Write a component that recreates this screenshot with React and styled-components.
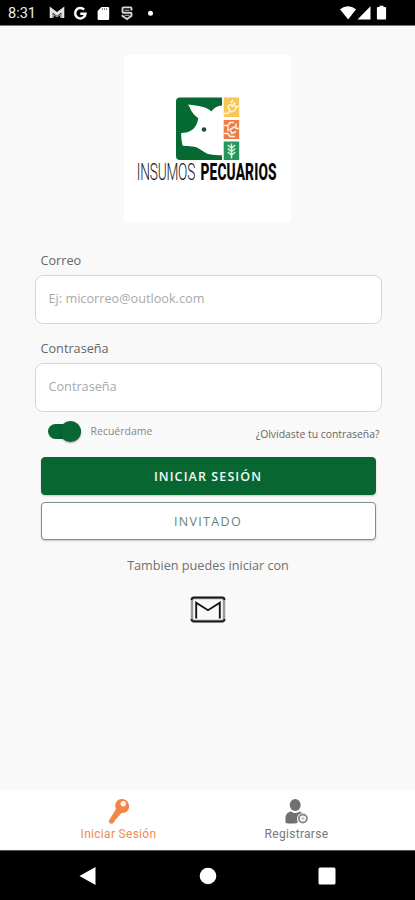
import React, { useState } from "react";
import styled, { createGlobalStyle } from "styled-components";

const GlobalStyle = createGlobalStyle`
  * {
    box-sizing: border-box;
  }

  body {
    margin: 0;
    background: #f9f9f9;
    font-family: "Open Sans", "Noto Sans", sans-serif;
  }

  button,
  input {
    font-family: inherit;
  }
`;

const StatusIcons = () => (
  <svg width="112" height="16" viewBox="0 0 112 16" fill="#fff">
    <path
      d="M2.2 13V4.500L8 9l5.800-4.500V13"
      fill="none"
      stroke="#e4e4e4"
      strokeWidth="3"
    />
    <path d="M4.500 12.500V9.500L8 12l3.500-2.500v3" fill="none" stroke="#aaa" />
    <path
      d="M35.100 4.600A5.200 5.200 0 1 0 36.500 8.700H31.300"
      fill="none"
      stroke="#fff"
      strokeWidth="2.500"
    />
    <path d="M52.500 2H59a1.200 1.200 0 0 1 1.200 1.200v10.600a1.200 1.200 0 0 1-1.200 1.200h-9.200a1.200 1.200 0 0 1-1.200-1.200V6z" />
    <path d="M53.500 3v2M55.500 3v2M57.500 3v2" stroke="#888" />
    <path
      d="M82.500 5.500V3.400a1 1 0 0 0-1-1h-7a1 1 0 0 0-1 1v3.300a1 1 0 0 0 1 1h7a1 1 0 0 1 1 1v2L78 14l-4.500-3v-1.300"
      fill="none"
      stroke="#d8d8d8"
      strokeWidth="1.900"
    />
    <path d="M75.500 5.200h5M75.500 10.300h5" stroke="#bbb" />
    <circle cx="101.500" cy="8.200" r="2.500" />
  </svg>
);

const SignalIcons = () => (
  <svg width="48" height="16" viewBox="0 0 48 16" fill="#fff">
    <path d="M0 4.300Q8 -1.600 16 4.300L8.200 14.600z" />
    <path d="M17.500 14.600L30.500 1.300v13.300z" />
    <path d="M39.500 .8h4V2h1.800q.8 0 .8.800v11q0 .8-.8.800h-7.600q-.8 0-.8-.8v-11q0-.8.800-.8h1.800z" />
  </svg>
);

const Logo = () => (
  <svg width="167" height="167" viewBox="0 0 167 167">
    <path
      d="M56 42.500h42V105H56q-4 0-4-4V46.500q0-4 4-4z"
      fill="#056a32"
    />
    <path
      d="M98 50.500c-4.500.3-8.500 2.500-10.700 6-5-4.500-12-5.500-23.300-6.900 3.200 4.400 3 8.700 10.300 13.700-.8 4.500-2.300 8.200-5.300 11-3.500 3-7.500 3.700-11.700 3.700-.6 4 .7 8.500 1.200 12.500 4.800 1.500 9.300.2 13 1.500 5.500 2 8 5.800 14 7.300 4 1.200 8.500.7 12.500 1z"
      fill="#fff"
    />
    <circle cx="80" cy="74.500" r="2.300" fill="#12542d" />

    <rect x="99.700" y="42.500" width="15.500" height="19.500" fill="#f7c657" />
    <path
      d="M100 58.500h4l2.500-4M108 52l3-4.500M105 54c-2.500-3 1-5.500 4-3.500 3-1.300 4 3 1.500 5-2 2-5.500 1.500-5.500-1.500zM107 48l2-3M112 52l3-1"
      fill="none"
      stroke="#fff4cf"
      strokeWidth="1.600"
    />

    <rect x="99.700" y="65" width="15.500" height="19" fill="#ef7d43" />
    <path
      d="M100 70.500h4l2-3h4M112 68.500v5h3M100 78.500h4l2 3h5M111 71.500l-5 3 2 4 4-2M104 71.500v5"
      fill="none"
      stroke="#fff0e5"
      strokeWidth="1.500"
    />

    <rect x="99.700" y="86.500" width="15.500" height="18.500" fill="#27965b" />
    <path
      d="M107.500 88.500v15M103.700 90l3.800 3 3.800-3M103.700 93.500l3.800 3 3.800-3M103.700 97l3.800 3 3.800-3"
      fill="none"
      stroke="#d9f1dc"
      strokeWidth="1.500"
    />

    <LogoText transform="translate(12.800 124.500) scale(0.585 1)" textLength="100" $light>
      INSUMOS
    </LogoText>
    <LogoText transform="translate(76.500 124.500) scale(0.585 1)" textLength="130">
      PECUARIOS
    </LogoText>
  </svg>
);

const MailIcon = () => (
  <svg width="36" height="28" viewBox="0 0 36 28" fill="none">
    <rect x="2" y="2" width="32" height="23" rx="2" stroke="#999" strokeWidth="2.500" />
    <path
      d="M1.500 4q0-2.500 2.500-2.500h28q2.500 0 2.500 2.500M1.500 23q0 2.500 2.500 2.500h28q2.500 0 2.500-2.500"
      stroke="#1c1c1c"
      strokeWidth="1.900"
    />
    <path d="M6.200 22.500V6.800L18 14.200 29.800 6.800V22.500" stroke="#151515" strokeWidth="1.900" />
  </svg>
);

const KeyIcon = () => (
  <svg width="24" height="28" viewBox="0 0 24 28">
    <path
      d="M14.800 2a7.200 7.200 0 0 1 7.400 7.200c0 4.500-3.700 7.300-8 6.800l-1.300 2.200-1.500.8-.8 2-1.500.8-2.500 4q-1.700 1.700-4.200.3-1-1.500 0-3.300L9 12C6.600 7 10 2 14.800 2z"
      fill="#ef8748"
    />
    <circle cx="16.300" cy="6.800" r="2.700" fill="#fff3e8" />
  </svg>
);

const UserPlusIcon = () => (
  <svg width="24" height="28" viewBox="0 0 24 28">
    <ellipse cx="10.200" cy="8" rx="5.500" ry="6" fill="#707070" />
    <path
      d="M.5 26v-5c0-4 2.500-5.700 5.500-6.500q4.200 3 8.500 0l3 1.500-5 6v4q-6.500 1-12 0z"
      fill="#707070"
    />
    <circle cx="17.900" cy="21.500" r="5.800" fill="#fff" />
    <circle cx="17.900" cy="21.500" r="4" fill="none" stroke="#858585" strokeWidth="1.800" />
    <path d="M17.900 19.700v3.600M16.100 21.500h3.600" stroke="#bbb" strokeWidth="1" />
  </svg>
);

const App = () => {
  const [email, setEmail] = useState("");
  const [password, setPassword] = useState("");
  const [remember, setRemember] = useState(true);

  return (
    <Screen>
      <GlobalStyle />
      <StatusBar>
        <Clock>8:31</Clock>
        <StatusIcons />
        <SignalWrapper>
          <SignalIcons />
        </SignalWrapper>
      </StatusBar>

      <Content>
        <LogoCard>
          <Logo />
        </LogoCard>

        <Fields>
          <Field>
            <Label htmlFor="email">Correo</Label>
            <Input
              id="email"
              placeholder="Ej: micorreo@outlook.com"
              value={email}
              onChange={(e) => setEmail(e.target.value)}
            />
          </Field>
          <Field>
            <Label htmlFor="password">Contraseña</Label>
            <Input
              id="password"
              type="password"
              placeholder="Contraseña"
              value={password}
              onChange={(e) => setPassword(e.target.value)}
            />
          </Field>
        </Fields>

        <Options>
          <Switch
            role="switch"
            aria-checked={remember}
            $on={remember}
            onClick={() => setRemember(!remember)}
          >
            <Thumb />
          </Switch>
          <RememberText>Recuérdame</RememberText>
          <ForgotLink>¿Olvidaste tu contraseña?</ForgotLink>
        </Options>

        <Actions>
          <Button $primary>INICIAR SESIÓN</Button>
          <Button>INVITADO</Button>
        </Actions>

        <AltText>Tambien puedes iniciar con</AltText>
        <MailButton aria-label="Correo">
          <MailIcon />
        </MailButton>
      </Content>

      <TabBar>
        <Tab $active>
          <KeyIcon />
          <TabLabel>Iniciar Sesión</TabLabel>
        </Tab>
        <Tab>
          <UserPlusIcon />
          <TabLabel>Registrarse</TabLabel>
        </Tab>
      </TabBar>

      <SystemBar>
        <svg width="18" height="20" viewBox="0 0 18 20">
          <path d="M0.500 10L16.500 1v18z" fill="#fff" />
        </svg>
        <svg width="18" height="18" viewBox="0 0 18 18">
          <circle cx="9" cy="9" r="8.300" fill="#fff" />
        </svg>
        <svg width="18" height="18" viewBox="0 0 18 18">
          <rect x="0.500" y="0.500" width="17" height="17" rx="1.500" fill="#fff" />
        </svg>
      </SystemBar>
    </Screen>
  );
};

const Screen = styled.div`
  width: 415px;
  height: 900px;
  display: flex;
  flex-direction: column;
  overflow: hidden;
  background: #f9f9f9;
`;

const StatusBar = styled.header`
  height: 26px;
  display: flex;
  align-items: center;
  padding: 0 27px 0 8px;
  background: #000;
  border-bottom: 1px solid #777;
`;

const Clock = styled.span`
  width: 41px;
  padding-top: 2px;
  color: #eee;
  font: 400 14.5px/16px Roboto, sans-serif;
`;

const SignalWrapper = styled.div`
  display: flex;
  margin-left: auto;
`;

const Content = styled.main`
  flex: 1;
  display: flex;
  flex-direction: column;
  align-items: center;
  padding: 29px 0 0 1px;
`;

const LogoCard = styled.div`
  display: flex;
  margin: 0 1px 29px 0;
  background: #fff;
`;

const LogoText = styled.text`
  font-family: Roboto, sans-serif;
  font-size: 23.5px;
  font-weight: ${({ $light }) => ($light ? 300 : 800)};
  fill: ${({ $light }) => ($light ? "#222" : "#080808")};
`;

const Fields = styled.div`
  width: 347px;
  display: flex;
  flex-direction: column;
  gap: 15px;
`;

const Field = styled.div`
  display: flex;
  flex-direction: column;
`;

const Label = styled.label`
  height: 24px;
  padding-left: 6px;
  color: #666;
  font-size: 12.7px;
  line-height: 19px;
`;

const Input = styled.input`
  width: 100%;
  height: 49px;
  padding: 0 13px 3px;
  border: 1px solid #d2d8d5;
  border-radius: 8px;
  outline: none;
  background: #fff;
  color: #444;
  font-size: 12.7px;

  &::placeholder {
    color: #a9a9a9;
  }
`;

const Options = styled.div`
  width: 347px;
  height: 30px;
  display: flex;
  align-items: center;
  margin-top: 4px;
  padding: 0 2px 0 13px;
`;

const Switch = styled.button`
  width: 33px;
  height: 15px;
  display: flex;
  align-items: center;
  justify-content: ${({ $on }) => ($on ? "flex-end" : "flex-start")};
  padding: 0;
  border: none;
  border-radius: 8px;
  background: #086631;
`;

const Thumb = styled.span`
  width: 21px;
  height: 21px;
  flex-shrink: 0;
  border-radius: 50%;
  background: #086631;
  box-shadow: 0 1px 2px rgba(0, 0, 0, 0.35);
`;

const RememberText = styled.span`
  margin-left: 10px;
  color: #888;
  font-size: 10.5px;
`;

const ForgotLink = styled.a`
  margin: 5px 0 0 auto;
  color: #666;
  font-size: 10.4px;
`;

const Actions = styled.div`
  width: 335px;
  display: flex;
  flex-direction: column;
  gap: 7px;
  margin-top: 11px;
`;

const Button = styled.button`
  height: 38px;
  padding: 0;
  border: 1px solid ${({ $primary }) => ($primary ? "#086631" : "#789487")};
  border-radius: 4px;
  background: ${({ $primary }) => ($primary ? "#086631" : "#fff")};
  color: ${({ $primary }) => ($primary ? "#f3faf5" : "#678476")};
  font-size: 12.5px;
  font-weight: ${({ $primary }) => ($primary ? 600 : 400)};
  letter-spacing: ${({ $primary }) => ($primary ? "1.1px" : "1.3px")};
  box-shadow: 0 1px 2px rgba(0, 0, 0, 0.2);
`;

const AltText = styled.p`
  margin: 15px 0 21px;
  color: #707070;
  font-size: 12.65px;
  line-height: 20px;
`;

const MailButton = styled.button`
  display: flex;
  padding: 0;
  border: none;
  background: none;
`;

const TabBar = styled.nav`
  height: 60px;
  display: flex;
  justify-content: center;
  background: #fff;
`;

const Tab = styled.div`
  width: 178px;
  display: flex;
  flex-direction: column;
  align-items: center;
  padding-top: 7px;
  color: ${({ $active }) => ($active ? "#f08b52" : "#777")};
`;

const TabLabel = styled.span`
  margin-top: 2px;
  font: 400 12px/15px Roboto, sans-serif;
  letter-spacing: 0.3px;
`;

const SystemBar = styled.footer`
  height: 50px;
  display: flex;
  align-items: center;
  justify-content: space-between;
  padding: 0 79px;
  border-top: 1px solid #555;
  background: #000;
`;

export default App;
